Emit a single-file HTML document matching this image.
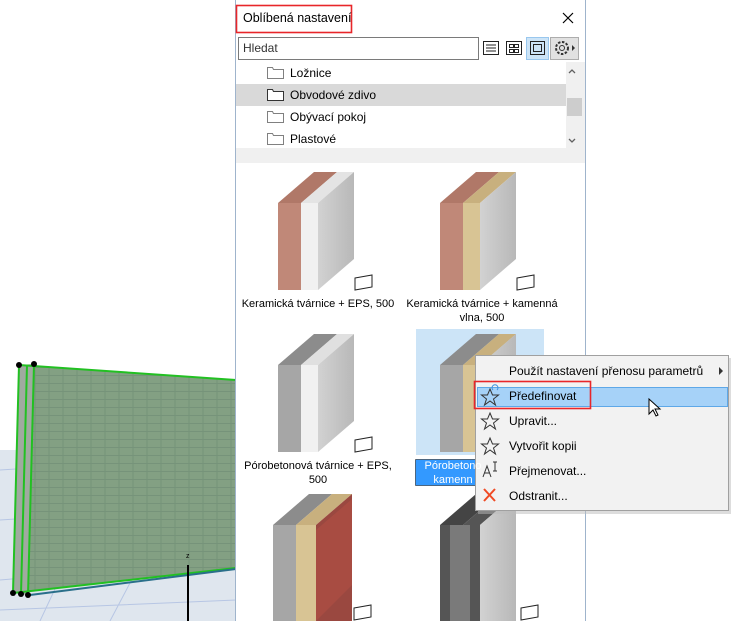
<!DOCTYPE html>
<html><head><meta charset="utf-8"><style>
*{margin:0;padding:0;box-sizing:border-box}
body{width:733px;height:621px;overflow:hidden;background:#fff;font-family:"Liberation Sans","DejaVu Sans",sans-serif;font-size:12px;color:#000;position:relative}
.a{position:absolute;white-space:nowrap}
.lbl{position:absolute;text-align:center;font-size:11px;line-height:14px;width:170px}
.mi{position:absolute;left:509px;font-size:12px}
</style></head><body>
<svg width="733" height="621" style="position:absolute;left:0;top:0">
<defs>
<pattern id="br" width="14" height="8" patternUnits="userSpaceOnUse"><rect width="14" height="8" fill="#83a083"/><path d="M0 7.5H14M7 0V7.5" stroke="#76937a" stroke-width="1"/></pattern>
<linearGradient id="sd" x1="0" x2="1"><stop offset="0" stop-color="#d2d2d2"/><stop offset="1" stop-color="#b8b8b8"/></linearGradient>
<g id="wi"><polygon points="77,75 94,72 94,84 77,87" fill="#fff" stroke="#222" stroke-width="1"/></g>
</defs>
<rect x="0" y="450" width="236" height="171" fill="#dfe6ee"/>
<g stroke="#b7c6e4" stroke-width="1" fill="none">
<path d="M0 470L236 455M0 520L236 505M0 580L236 560M0 610L236 600M40 621L120 450M110 621L200 450"/>
</g>
<polygon points="19,365 236,380 236,568 13,593" fill="url(#br)"/>
<polygon points="19,365 34,364 28,595 13,593" fill="#a0aaa0"/>
<path d="M19 365L236 380M13 593L236 568M19 365L13 593M27 365L21 594M34 364L28 595" stroke="#22c022" stroke-width="2" fill="none"/>
<path d="M30 595L236 569" stroke="#2a6f8a" stroke-width="2"/>
<g fill="#000"><circle cx="19" cy="365" r="3"/><circle cx="34" cy="364" r="3"/><circle cx="13" cy="593" r="3"/><circle cx="21" cy="594" r="3"/><circle cx="28" cy="595" r="3"/></g>
<path d="M188 565V621" stroke="#000" stroke-width="2"/>
<text x="186" y="558" font-size="7" font-family="Liberation Sans">z</text>
<rect x="236" y="0" width="350" height="621" fill="#fff"/>
<path d="M235.5 0V621M585.5 0V621" stroke="#9fb4cc"/>
<rect x="236" y="148" width="349" height="15" fill="#f0f0f0"/>
<rect x="236" y="84" width="330" height="22" fill="#d9d9d9"/>
<rect x="566" y="62" width="19" height="86" fill="#f0f0f0"/>
<rect x="567" y="98" width="15" height="18" fill="#cdcdcd"/>
<path d="M569 73l3-3 3 3M569 139l3 3 3-3" stroke="#606060" fill="none" stroke-width="1.3"/>
<g fill="#fff" stroke="#808080">
<path d="M267.5 67.5h5l1 2h10v9h-16z"/><path d="M267.5 89.5h5l1 2h10v9h-16z" stroke="#333"/><path d="M267.5 111.5h5l1 2h10v9h-16z"/><path d="M267.5 133.5h5l1 2h10v9h-16z"/>
</g>
<rect x="238.5" y="37.5" width="240" height="22" fill="#fff" stroke="#7a7a7a"/>
<rect x="236.5" y="5.5" width="115" height="27" fill="none" stroke="#e8262a" stroke-width="1.6"/>
<path d="M563 13l10 10M573 13l-10 10" stroke="#000" stroke-width="1.2"/>
<rect x="483.5" y="41.5" width="15" height="13" fill="#fff" stroke="#222"/><path d="M486 45h10M486 48h10M486 51h10" stroke="#222"/>
<rect x="506.5" y="41.5" width="15" height="13" fill="#fff" stroke="#222"/><path d="M509.5 44.5h4v3h-4zM514.5 44.5h4v3h-4zM509.5 49.5h4v3h-4zM514.5 49.5h4v3h-4z" fill="none" stroke="#222"/>
<rect x="526.5" y="37.5" width="22" height="22" fill="#cce4f7" stroke="#99c7ee"/><rect x="530.5" y="41.5" width="14" height="13" fill="none" stroke="#222"/><rect x="533.5" y="44.5" width="8" height="7" fill="none" stroke="#222"/>
<rect x="550.5" y="37.5" width="28" height="22" fill="#e1e1e1" stroke="#adadad"/>
<circle cx="562" cy="48" r="6" fill="none" stroke="#333" stroke-dasharray="2.5 1.5" stroke-width="2"/><circle cx="562" cy="48" r="2.5" fill="none" stroke="#333"/>
<path d="M572 45l3 3-3 3z" fill="#333"/>
<rect x="416" y="329" width="128" height="126" fill="#cce4f7"/>
<g transform="translate(278,203)">
<polygon points="0,0 23,0 59,-31 36,-31" fill="#b07868"/><polygon points="23,0 40,0 76,-31 59,-31" fill="#e4e4e4"/>
<rect x="0" y="0" width="23" height="87" fill="#c08878"/><rect x="23" y="0" width="17" height="87" fill="#f1f1f1"/>
<polygon points="40,0 76,-31 76,56 40,87" fill="url(#sd)"/><use href="#wi"/></g>
<g transform="translate(440,203)">
<polygon points="0,0 23,0 59,-31 36,-31" fill="#b07868"/><polygon points="23,0 40,0 76,-31 59,-31" fill="#c8b07e"/>
<rect x="0" y="0" width="23" height="87" fill="#c08878"/><rect x="23" y="0" width="17" height="87" fill="#d8c494"/>
<polygon points="40,0 76,-31 76,56 40,87" fill="url(#sd)"/><use href="#wi"/></g>
<g transform="translate(278,365)">
<polygon points="0,0 23,0 59,-31 36,-31" fill="#8c8c8c"/><polygon points="23,0 40,0 76,-31 59,-31" fill="#e0e0e0"/>
<rect x="0" y="0" width="23" height="87" fill="#a6a6a6"/><rect x="23" y="0" width="17" height="87" fill="#f1f1f1"/>
<polygon points="40,0 76,-31 76,56 40,87" fill="url(#sd)"/><use href="#wi"/></g>
<g transform="translate(440,365)">
<polygon points="0,0 23,0 59,-31 36,-31" fill="#8c8c8c"/><polygon points="23,0 40,0 76,-31 59,-31" fill="#c8b07e"/>
<rect x="0" y="0" width="23" height="87" fill="#a6a6a6"/><rect x="23" y="0" width="17" height="87" fill="#d8c494"/>
<polygon points="40,0 76,-31 76,56 40,87" fill="url(#sd)"/></g>
<g transform="translate(273,525)">
<polygon points="0,0 23,0 59,-31 36,-31" fill="#8c8c8c"/><polygon points="23,0 43,0 79,-31 59,-31" fill="#c8b07e"/>
<rect x="0" y="0" width="23" height="96" fill="#a6a6a6"/><rect x="23" y="0" width="20" height="96" fill="#d8c494"/>
<polygon points="43,0 79,-31 79,96 43,96" fill="#9a4840"/><polygon points="43,5 79,-26 79,60 43,96" fill="#a84c42"/>
<use href="#wi" transform="translate(4,8)"/></g>
<g transform="translate(440,525)">
<polygon points="0,0 23,0 59,-31 36,-31" fill="#444"/><polygon points="23,0 40,0 76,-31 59,-31" fill="#555"/>
<rect x="0" y="0" width="10" height="96" fill="#555"/><rect x="10" y="0" width="20" height="96" fill="#7a7a7a"/><rect x="30" y="0" width="10" height="96" fill="#555"/>
<polygon points="40,0 76,-31 76,96 40,96" fill="url(#sd)"/><use href="#wi" transform="translate(4,8)"/></g>
<rect x="415.5" y="459.5" width="130" height="26" fill="#3399ff" stroke="#000" stroke-dasharray="1 1"/>
<rect x="478" y="358" width="253" height="156" fill="#bbb" opacity="0.5"/>
<rect x="475.5" y="355.5" width="253" height="155" fill="#f2f2f2" stroke="#a0a0a0"/>
<rect x="477.5" y="387.5" width="250" height="19" fill="#a6d2f8" stroke="#5ea8e8"/>
<rect x="474.5" y="381.5" width="116" height="27" fill="none" stroke="#e8262a" stroke-width="1.6"/>
<path d="M719 367l4 4-4 4z" fill="#333"/>
<g fill="none" stroke="#333" stroke-width="1">
<path d="M490 389l2.5 6h6l-5 4 2 6-5.5-4-5.5 4 2-6-5-4h6z"/>
<path d="M490 413l2.5 6h6l-5 4 2 6-5.5-4-5.5 4 2-6-5-4h6z"/>
<path d="M490 438l2.5 6h6l-5 4 2 6-5.5-4-5.5 4 2-6-5-4h6z"/>
<path d="M483 477l4-11 4 11M484.5 473h5M493 462h4M495 462v9M493 471h4"/>
</g>
<path d="M493 390a3 3 0 1 1 4 0" stroke="#3b8ee0" fill="none"/>
<path d="M484 489l11 12M495 489l-11 12" stroke="#f04a24" stroke-width="2"/>
<path d="M649 399v15l4-4 3 6 2-1-3-6h5z" fill="#fff" stroke="#000"/>
</svg>
<div class="a" style="left:243px;top:11px;font-size:12.5px">Oblíbená nastavení</div>
<div class="a" style="left:243px;top:41px;font-size:12px;color:#333">Hledat</div>
<div class="a" style="left:290px;top:66px">Ložnice</div>
<div class="a" style="left:290px;top:88px">Obvodové zdivo</div>
<div class="a" style="left:290px;top:110px">Obývací pokoj</div>
<div class="a" style="left:290px;top:132px">Plastové</div>
<div class="lbl" style="left:233px;top:297px">Keramická tvárnice + EPS, 500</div>
<div class="lbl" style="left:397px;top:297px">Keramická tvárnice + kamenná<br>vlna, 500</div>
<div class="lbl" style="left:233px;top:459px">Pórobetonová tvárnice + EPS,<br>500</div>
<div class="a" style="left:418px;top:459px;font-size:11px;line-height:14px;color:#fff;text-align:center;width:70px">Pórobetono<br>kamenn</div>
<div class="mi" style="top:364px">Použít nastavení přenosu parametrů</div>
<div class="mi" style="top:389px">Předefinovat</div>
<div class="mi" style="top:414px">Upravit...</div>
<div class="mi" style="top:439px">Vytvořit kopii</div>
<div class="mi" style="top:464px">Přejmenovat...</div>
<div class="mi" style="top:489px">Odstranit...</div>
</body></html>
